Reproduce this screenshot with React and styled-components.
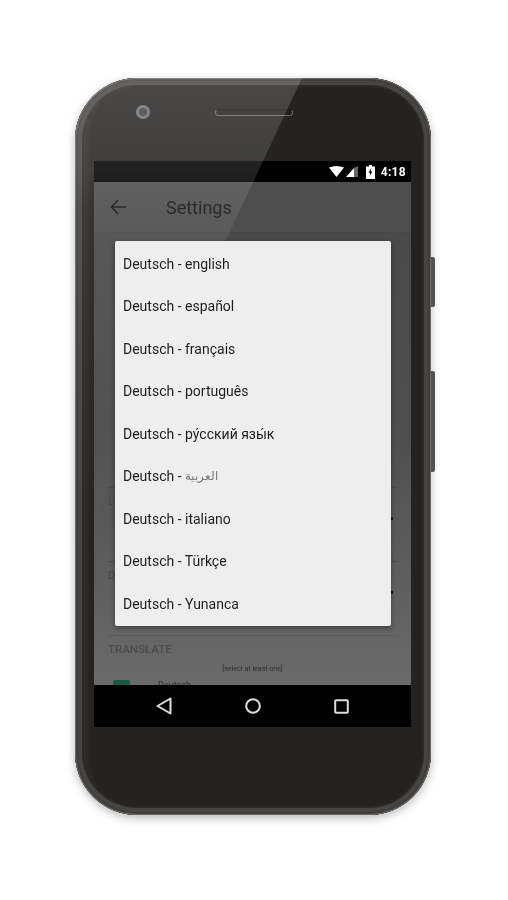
import React from 'react';
import styled, { createGlobalStyle } from 'styled-components';

const languages = [
  'english',
  'español',
  'français',
  'português',
  'ру́сский язы́к',
  'العربية',
  'italiano',
  'Türkçe',
  'Yunanca',
];

const GlobalStyle = createGlobalStyle`
  html, body {
    margin: 0;
    background: #fff;
  }
  body {
    font-family: Roboto, "Noto Sans", sans-serif;
  }
`;

const Page = styled.div`
  width: 508px;
  height: 900px;
  padding: 78px 0 0 75px;
  box-sizing: border-box;
  overflow: hidden;
`;

const Phone = styled.div`
  position: relative;
  width: 356px;
  height: 737px;
  box-sizing: border-box;
  padding: 0 20px 0 19px;
  display: flex;
  flex-direction: column;
  border-radius: 62px;
  background: #252321;
  box-shadow:
    inset 0 0 0 1px #6d6b68,
    inset 0 0 0 3px #3f3d3b,
    inset 0 0 0 7px #474542,
    inset 0 0 0 9px #2b2927,
    inset 19px 0 10px -10px rgba(255, 255, 255, 0.1),
    0 3px 10px rgba(0, 0, 0, 0.28);
  filter: blur(0.5px);
`;

const SideKey = styled.div`
  position: absolute;
  right: -4px;
  top: ${(p) => p.$top}px;
  width: 4px;
  height: ${(p) => p.$height}px;
  background: #555351;
  border-radius: 0 2px 2px 0;
`;

const Glare = styled.div`
  position: absolute;
  inset: 0;
  z-index: 1;
  border-radius: 62px;
  background: linear-gradient(
    rgba(255, 255, 255, 0.17) 0,
    rgba(255, 255, 255, 0.13) 90px,
    rgba(255, 255, 255, 0.08) 135px,
    rgba(255, 255, 255, 0.03) 300px,
    rgba(255, 255, 255, 0) 483px
  );
  clip-path: polygon(0 0, 227px 0, 0 483px);
  pointer-events: none;
`;

const TopBezel = styled.div`
  height: 83px;
  flex: none;
  box-sizing: border-box;
  padding: 28px 0 0 42px;
  display: grid;
  grid-template-columns: 79px 78px;
  grid-template-rows: 12px 14px;
  row-gap: 19px;
  align-items: center;
`;

const Camera = styled.div`
  width: 14px;
  height: 14px;
  box-sizing: border-box;
  border: 3px solid #727272;
  border-radius: 50%;
  background: #424242;
`;

const Speaker = styled.div`
  height: 7px;
  background: #232120;
  border-radius: 4px;
  border: 1px solid #6a6a6a;
  border-top-color: #151515;
  box-sizing: border-box;
`;

const Sensor = styled.div`
  grid-column: 2;
  justify-self: center;
  width: 28px;
  height: 13px;
  border-radius: 6px;
  background: #242322;
`;

const Screen = styled.div`
  position: relative;
  height: 566px;
  flex: none;
  display: flex;
  flex-direction: column;
  background: #000;
`;

const StatusBar = styled.div`
  height: 21px;
  flex: none;
  background: #000;
  display: flex;
  align-items: center;
  justify-content: flex-end;
  gap: 2px;
  padding-right: 5px;
  color: #fff;
`;

const Clock = styled.span`
  font-size: 12px;
  font-weight: 700;
  margin-left: 4px;
  letter-spacing: 0.3px;
`;

const AppBar = styled.div`
  height: 51px;
  flex: none;
  background: #4e4e4e;
  border-bottom: 1px solid #474747;
  box-sizing: border-box;
  display: flex;
  align-items: center;
  padding-left: 16px;
  gap: 40px;
`;

const Title = styled.span`
  padding-top: 1px;
  font-size: 18px;
  line-height: 52px;
  color: #161616;
`;

const Content = styled.div`
  flex: 1;
  overflow: hidden;
  box-sizing: border-box;
  padding: 254px 14px 0;
  background: linear-gradient(#4a4a4a 0%, #4f4f4f 45%, #6a6a6a 100%);
`;

const SettingRow = styled.div`
  height: 74px;
  box-sizing: border-box;
  border-top: 1px solid #4a4a4a;
  display: flex;
  justify-content: space-between;
  font-size: 11px;
  color: #484848;
`;

const RowLabel = styled.span`
  margin-top: 7px;
  line-height: 13px;
`;

const Tick = styled.span`
  width: 2px;
  height: 3px;
  margin: 29px 4px 0 0;
  background: #1c1c1c;
`;

const SectionLabel = styled.div`
  border-top: 1px solid #5c5c5c;
  padding-top: 6px;
  font-size: 11.5px;
  font-weight: 500;
  line-height: 14px;
  color: #4c4c4c;
`;

const Hint = styled.div`
  margin-top: 9px;
  font-size: 7px;
  line-height: 8px;
  text-align: center;
  color: #2e2e2e;
`;

const CheckRow = styled.div`
  margin: 7px 0 0 5px;
  display: flex;
  gap: 28px;
  font-size: 9px;
  color: #2e2e2e;
`;

const CheckBox = styled.span`
  width: 17px;
  height: 17px;
  border-radius: 2px;
  background: #1b5a42;
`;

const Dialog = styled.div`
  position: absolute;
  z-index: 2;
  left: 21px;
  top: 80px;
  width: 276px;
  height: 385px;
  padding-top: 1.5px;
  box-sizing: border-box;
  background: #eeeeee;
  border-radius: 2px;
  box-shadow: 0 2px 5px rgba(0, 0, 0, 0.4);
`;

const LanguageItem = styled.div`
  height: 42.5px;
  padding-left: 8px;
  display: flex;
  align-items: center;
  gap: 0.25em;
  font-size: 14px;
  color: #1e1e1e;
`;

const ArabicName = styled.span`
  font-size: 11.5px;
  color: #777;
`;

const NavBar = styled.div`
  height: 42px;
  flex: none;
  background: #000;
  display: flex;
  align-items: center;
  justify-content: space-between;
  padding: 0 62px;
`;

const BottomBezel = styled.div`
  flex: 1;
`;

function WifiIcon() {
  return (
    <svg width="15" height="11" viewBox="0 0 15 11">
      <path d="M0 1.5Q7.5-1.5 15 1.5L7.5 11Z" fill="#fff" />
    </svg>
  );
}

function SignalIcon() {
  return (
    <svg width="12" height="11" viewBox="0 0 12 11">
      <path d="M0 11 8 2V11Z" fill="#fff" />
      <path d="M8 2 12 0V11H8Z" fill="#666" />
    </svg>
  );
}

function BatteryIcon() {
  return (
    <svg width="9" height="14" viewBox="0 0 9 14" style={{ marginLeft: 6 }}>
      <path d="M3 0H6V1.5H9V14H0V1.5H3Z" fill="#fff" />
      <path d="M5.2 3.2 2.6 7.8H4.2L3.7 11 6.4 6.4H4.8Z" fill="#000" />
    </svg>
  );
}

function BackIcon() {
  return (
    <svg width="16" height="16" viewBox="0 0 16 16" fill="none" stroke="#141414" strokeWidth="1.5">
      <path d="M16 8H1.5M8 1.2 1.2 8 8 14.8" />
    </svg>
  );
}

function NavBack() {
  return (
    <svg width="16" height="18" viewBox="0 0 16 18" fill="none" stroke="#ddd" strokeWidth="2" strokeLinejoin="round">
      <path d="M14.5 1.5V16.5L1.5 9Z" />
    </svg>
  );
}

function NavHome() {
  return (
    <svg width="16" height="16" viewBox="0 0 16 16" fill="none" stroke="#ddd" strokeWidth="2">
      <circle cx="8" cy="8" r="6.8" />
    </svg>
  );
}

function NavRecent() {
  return (
    <svg width="15" height="15" viewBox="0 0 15 15" fill="none" stroke="#ddd" strokeWidth="2" strokeLinejoin="round">
      <rect x="1.2" y="1.2" width="12.6" height="12.6" rx="1" />
    </svg>
  );
}

export default function App() {
  return (
    <Page>
      <GlobalStyle />
      <Phone>
        <SideKey $top={179} $height={50} />
        <SideKey $top={293} $height={101} />
        <Glare />
        <TopBezel>
          <Camera />
          <Speaker />
          <Sensor />
        </TopBezel>
        <Screen>
          <StatusBar>
            <WifiIcon />
            <SignalIcon />
            <BatteryIcon />
            <Clock>4:18</Clock>
          </StatusBar>
          <AppBar>
            <BackIcon />
            <Title>Settings</Title>
          </AppBar>
          <Content>
            <SettingRow>
              <RowLabel>D</RowLabel>
              <Tick />
            </SettingRow>
            <SettingRow>
              <RowLabel>D</RowLabel>
              <Tick />
            </SettingRow>
            <SectionLabel>TRANSLATE</SectionLabel>
            <Hint>[select at least one]</Hint>
            <CheckRow>
              <CheckBox />
              <span>Deutsch</span>
            </CheckRow>
          </Content>
          <NavBar>
            <NavBack />
            <NavHome />
            <NavRecent />
          </NavBar>
          <Dialog>
            {languages.map((language) => (
              <LanguageItem key={language}>
                Deutsch -{' '}
                {language === 'العربية' ? <ArabicName>{language}</ArabicName> : language}
              </LanguageItem>
            ))}
          </Dialog>
        </Screen>
        <BottomBezel />
      </Phone>
    </Page>
  );
}
